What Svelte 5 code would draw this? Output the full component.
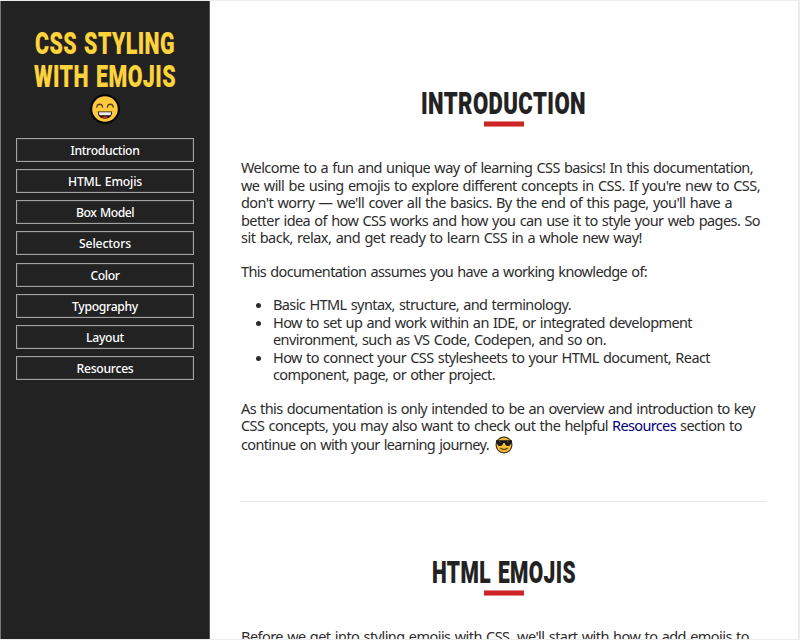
<script>
  const nav = [
    ['Introduction', 69], ['HTML Emojis', 74], ['Box Model', 58], ['Selectors', 52],
    ['Color', 29], ['Typography', 66], ['Layout', 38], ['Resources', 57]
  ];
  const welcome = [
    ['Welcome to a fun and unique way of learning CSS basics! In this documentation,', 512],
    ["we will be using emojis to explore different concepts in CSS. If you're new to CSS,", 519],
    ["don't worry — we'll cover all the basics. By the end of this page, you'll have a", 491],
    ['better idea of how CSS works and how you can use it to style your web pages. So', 519],
    ['sit back, relax, and get ready to learn CSS in a whole new way!', 401]
  ];
  const items = [
    [['Basic HTML syntax, structure, and terminology.', 298]],
    [['How to set up and work within an IDE, or integrated development', 419], ['environment, such as VS Code, Codepen, and so on.', 333]],
    [['How to connect your CSS stylesheets to your HTML document, React', 437], ['component, page, or other project.', 222]]
  ];

  // Tunes the tracking of one line so that it fills its measure.
  function fit(node, width) {
    const natural = node.getBoundingClientRect().width;
    node.style.letterSpacing = `${(width - natural) / node.textContent.length}px`;
  }
</script>

{#snippet line(text, width)}
  <span class="line"><span class="run" use:fit={width}>{text}</span></span>
{/snippet}

{#snippet title(text, width)}
  <h2>
    <svg {width} height="34" viewBox="0 0 {width} 34"><text x="0" y="28" textLength={width} lengthAdjust="spacingAndGlyphs">{text}</text></svg>
    <i></i>
  </h2>
{/snippet}

<div class="page">
  <aside>
    <h1>
      <svg width="142" height="68" viewBox="0 0 142 68">
        <text x="1" y="26" textLength="140" lengthAdjust="spacingAndGlyphs">CSS STYLING</text>
        <text x="0" y="59" textLength="142" lengthAdjust="spacingAndGlyphs">WITH EMOJIS</text>
      </svg>
      <svg class="grin" width="30" height="30" viewBox="0 0 30 30">
        <circle cx="15" cy="15" r="13.8" fill="#ffc83d" stroke="#050505" stroke-width="2" />
        <path d="M6.800 13q.4-2.800 2.900-2.800t2.900 2.800M17.400 13q.4-2.800 2.900-2.800t2.900 2.800" fill="none" stroke="#55431f" stroke-width="1.400" stroke-linecap="round" />
        <path d="M7.700 17.500h14.600q-.5 7.300-7.300 7.300t-7.300-7.300z" fill="#14100c" />
        <path d="M8.700 18.200h12.600l-.8 3h-11z" fill="#eee" />
        <path d="M12 23.400q3-2.200 6 0-3 1.700-6 0z" fill="#d8371c" />
      </svg>
    </h1>
    <nav>
      {#each nav as [label, width]}
        <a href="#top"><span class="run" use:fit={width}>{label}</span></a>
      {/each}
    </nav>
  </aside>
  <main>
    <section>
      {@render title('INTRODUCTION', 165)}
      <p>{#each welcome as [t, w]}{@render line(t, w)}{/each}</p>
      <p class="one">{@render line('This documentation assumes you have a working knowledge of:', 406)}</p>
      <ul>
        {#each items as rows}
          <li>{#each rows as [t, w]}{@render line(t, w)}{/each}</li>
        {/each}
      </ul>
      <p class="last">
        {@render line('As this documentation is only intended to be an overview and introduction to key', 514)}
        <span class="line mixed"><span class="run" use:fit={367}>CSS concepts, you may also want to check out the helpful</span><a href="#top" class="run" use:fit={64}>Resources</a><span class="run" use:fit={62}>section to</span></span>
        <span class="line journey"><span class="run" use:fit={248}>continue on with your learning journey.</span>
          <svg width="18" height="18" viewBox="0 0 18 18">
            <circle cx="9" cy="9" r="7.9" fill="#f5bb35" stroke="#40351d" stroke-width="1.200" />
            <path d="M1 4.300h16v2l-1 .5q-.4 3.200-3 3.200-2.700 0-3.200-3h-1.600q-.5 3-3.200 3-2.600 0-3-3.200l-1-.5z" fill="#171714" />
            <path d="M4 5.500l1.500 1M12 5.500l1.500 1" stroke="#8d8b80" stroke-width=".8" />
            <path d="M5.500 12.200q3.500 2.500 7 0" fill="none" stroke="#49350e" stroke-width="1.100" />
          </svg>
        </span>
      </p>
    </section>
    <section>
      {@render title('HTML EMOJIS', 144)}
      <p>{@render line("Before we get into styling emojis with CSS, we'll start with how to add emojis to", 508)}</p>
    </section>
  </main>
</div>

<style>
  :global(body) { margin: 0; overflow: hidden; }
  .page {
    display: flex; box-sizing: border-box; width: 800px; height: 640px; overflow: hidden;
    border: solid #ececec; border-width: 1px 2px 1px 0; background: #fff;
    color: #2c2c2c; font: 14.5px/17.6px "Noto Sans", sans-serif;
  }
  aside { box-sizing: border-box; flex: none; width: 210px; height: 638px; padding: 27px 15px 0; background: #222; border-left: 1px solid #777; border-right: 1px solid #555; }
  h1, h2 { margin: 0; display: flex; flex-direction: column; align-items: center; }
  svg { display: block; overflow: visible; }
  text { font: 900 30.5px Roboto, sans-serif; letter-spacing: .6px; word-spacing: 2px; fill: #222; stroke: #222; stroke-width: .15px; }
  h1 text { fill: #ffd43b; stroke: #ffd43b; }
  h1 { height: 110px; }
  .grin { margin-top: -2px; }
  nav { display: flex; flex-direction: column; gap: 7.15px; }
  nav a { box-sizing: border-box; height: 24px; border: 1px solid #a2a2a2; box-shadow: inset 0 0 0 1px #333; color: #fff; font: 500 12.2px/24px "Noto Sans", sans-serif; text-align: center; text-decoration: none; }
  .run { white-space: pre; word-spacing: 1px; }
  .line { display: block; white-space: nowrap; }
  main { width: 525px; margin-left: 31px; flex: none; }
  section { box-sizing: border-box; height: 469px; }
  section:first-child { height: 501px; padding-top: 85px; border-bottom: 1px solid #e5e5e5; }
  section:last-child { padding-top: 53px; }
  h2 i { box-sizing: border-box; width: 40px; height: 6px; margin: 1px 0 0 1px; background: #cc2424; border: solid #e28686; border-width: 1px 0; }
  p { margin: 32px 0 16px; }
  .one { margin: 16px 0 15.4px; }
  ul { margin: 15.4px 0 15.6px; padding-left: 32px; }
  .last { margin: 15.6px 0 0; }
  .last a { color: #000080; text-decoration: none; }
  .mixed { display: flex; gap: 4px; }
  .journey { display: flex; align-items: center; gap: 6px; height: 20px; }
</style>
